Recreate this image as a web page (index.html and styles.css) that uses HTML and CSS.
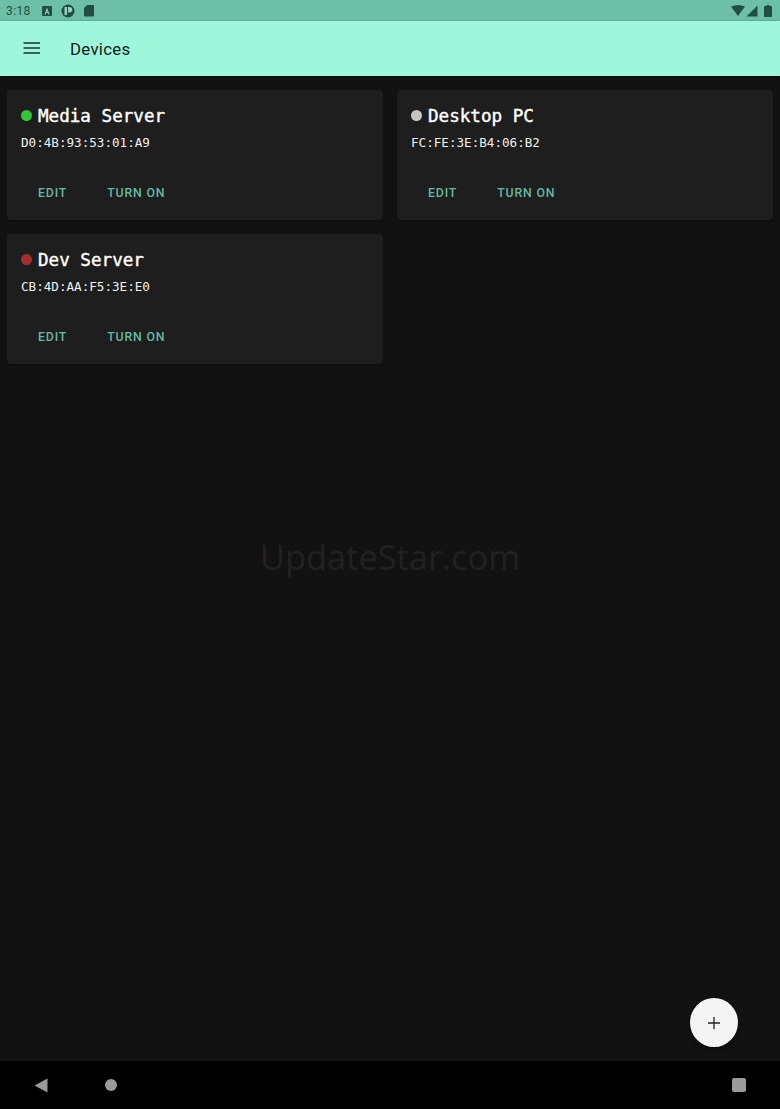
FILE: index.html
```html
<!DOCTYPE html>
<html lang="en">
<head>
<meta charset="utf-8">
<title>Devices</title>
<link rel="stylesheet" href="styles.css">
</head>
<body>
<div class="screen">
  <div class="status">
    <span class="time">3:18</span>
    <div class="status-left">
      <svg class="ic" width="12" height="12" viewBox="0 0 12 12"><rect x="1" y="1" width="10" height="10" rx="1" fill="#1f4f43"/><path d="M6 2.500 8.500 9.500H7.300L6.800 8H5.200L4.700 9.500H3.500ZM5.500 7H6.500L6 5.400Z" fill="#8fd0ba"/></svg>
      <svg class="ic" width="14" height="14" viewBox="0 0 14 14"><circle cx="7" cy="7" r="6.500" fill="#1f4f43"/><path d="M3.500 3H6V11H3.500ZM7 3H8.500A2.500 2.500 0 0 1 8.500 8.500H7Z" fill="#8fd0ba"/></svg>
      <svg class="ic" width="12" height="13" viewBox="0 0 12 13"><path d="M4 1H10A1 1 0 0 1 11 2V11.500A1 1 0 0 1 10 12.500H2A1 1 0 0 1 1 11.500V4Z" fill="#1f4f43"/></svg>
    </div>
    <div class="status-right">
      <svg width="14" height="11" viewBox="0 0 14 11"><path d="M0 1.500Q7-1.500 14 1.500L7 11Z" fill="#1f4f43"/></svg>
      <svg width="12" height="12" viewBox="0 0 12 12"><path d="M11.500.5V11.500H.5Z" fill="#1f4f43"/></svg>
      <svg width="8" height="12" viewBox="0 0 8 12"><path d="M2.500 0H5.500V1H7A1 1 0 0 1 8 2V11A1 1 0 0 1 7 12H1A1 1 0 0 1 0 11V2A1 1 0 0 1 1 1H2.500Z" fill="#1f4f43"/></svg>
    </div>
  </div>
  <header class="bar">
    <svg class="menu" width="18" height="12" viewBox="0 0 18 12"><path d="M.5 1H17M.5 6H17M.5 11H17" stroke="#16352c" stroke-width="1.300" fill="none"/></svg>
    <h1 class="title">Devices</h1>
  </header>
  <main class="content">
    <div class="cards">
      <article class="card">
        <div class="name"><span class="dot green"></span>Media Server</div>
        <div class="mac">D0:4B:93:53:01:A9</div>
        <div class="actions"><span>EDIT</span><span>TURN ON</span></div>
      </article>
      <article class="card">
        <div class="name"><span class="dot grey"></span>Desktop PC</div>
        <div class="mac">FC:FE:3E:B4:06:B2</div>
        <div class="actions"><span>EDIT</span><span>TURN ON</span></div>
      </article>
      <article class="card">
        <div class="name"><span class="dot red"></span>Dev Server</div>
        <div class="mac">CB:4D:AA:F5:3E:E0</div>
        <div class="actions"><span>EDIT</span><span>TURN ON</span></div>
      </article>
    </div>
    <div class="watermark">UpdateStar.com</div>
    <button class="fab" aria-label="Add"><svg width="12" height="12" viewBox="0 0 12 12"><path d="M6 0V12M0 6H12" stroke="#222" stroke-width="1.300"/></svg></button>
  </main>
  <nav class="nav">
    <svg class="back" width="14" height="15" viewBox="0 0 14 15"><path d="M13.500.5V14.500L.5 7.500Z" fill="#9a9a9a"/></svg>
    <span class="home"></span>
    <span class="recent"></span>
  </nav>
</div>
</body>
</html>
```
FILE: styles.css
```css
* { box-sizing: border-box; }
html, body { margin: 0; padding: 0; }
body { width: 780px; height: 1109px; overflow: hidden; background: #121212; font-family: "Roboto", sans-serif; }
.screen { width: 780px; height: 1109px; display: flex; flex-direction: column; }
.status { height: 21px; flex: none; background: #6dbfa6; display: flex; align-items: center; padding: 0 8px 0 6px; color: #1f4f43; }
.time { font-size: 12px; letter-spacing: .4px; width: 35px; }
.status-left { display: flex; align-items: center; gap: 8px; flex: 1; }
.status-right { display: flex; align-items: center; gap: 1px; }
.status-right svg:last-child { margin-left: 5px; }
.bar { height: 55px; flex: none; background: #9ff7db; display: flex; align-items: center; padding: 0 0 0 23px; box-shadow: 0 1px 3px rgba(0,0,0,.5); position: relative; }
.menu { margin-top: -2px; }
.title { margin: 0 0 -1px 29px; font-size: 16.800px; font-weight: 400; letter-spacing: .3px; color: #10221c; }
.content { flex: 1; position: relative; padding: 14px 7px; }
.cards { display: grid; grid-template-columns: 376px 376px; column-gap: 14px; row-gap: 14px; align-items: start; }
.card { height: 130px; background: #1e1e1e; border-radius: 4px; padding: 14px 14px 0; box-shadow: 0 1px 2px rgba(0,0,0,.35); color: #fff; }
.name { display: flex; align-items: center; font-family: "DejaVu Sans Mono", monospace; font-size: 17.600px; font-weight: 400; -webkit-text-stroke: .4px #fff; height: 24px; white-space: pre; }
.dot { width: 11px; height: 11px; border-radius: 50%; margin: -2px 6px 0 0; flex: none; }
.green { background: #32c638; }
.grey { background: #c4c4c4; }
.red { background: #a32f2f; }
.mac { margin: 7px 0 0; font-family: "DejaVu Sans Mono", monospace; font-size: 12.600px; line-height: 16px; color: #f0f0f0; }
.actions { display: flex; gap: 40px; margin: 34px 0 0 17px; font-family: "Roboto", sans-serif; font-size: 12.300px; font-weight: 500; letter-spacing: .85px; color: #66b8a0; line-height: 16px; }
.watermark { position: absolute; left: 0; right: 0; top: 459px; text-align: center; font-family: "Open Sans", sans-serif; font-size: 34.400px; line-height: 44px; color: #212121; }
.fab { position: absolute; right: 42px; bottom: 14px; width: 48px; height: 49px; border: 0; border-radius: 50%; padding: 0; background: #f4f4f4; display: flex; align-items: center; justify-content: center; box-shadow: 0 2px 5px rgba(0,0,0,.4); }
.nav { height: 48px; flex: none; background: #000; display: flex; align-items: center; padding: 0 34px; position: relative; }
.back { flex: none; }
.home { width: 12px; height: 12px; border-radius: 50%; background: #9a9a9a; margin-left: 57px; }
.recent { width: 14px; height: 14px; border-radius: 2px; background: #9a9a9a; margin-left: auto; }
```
